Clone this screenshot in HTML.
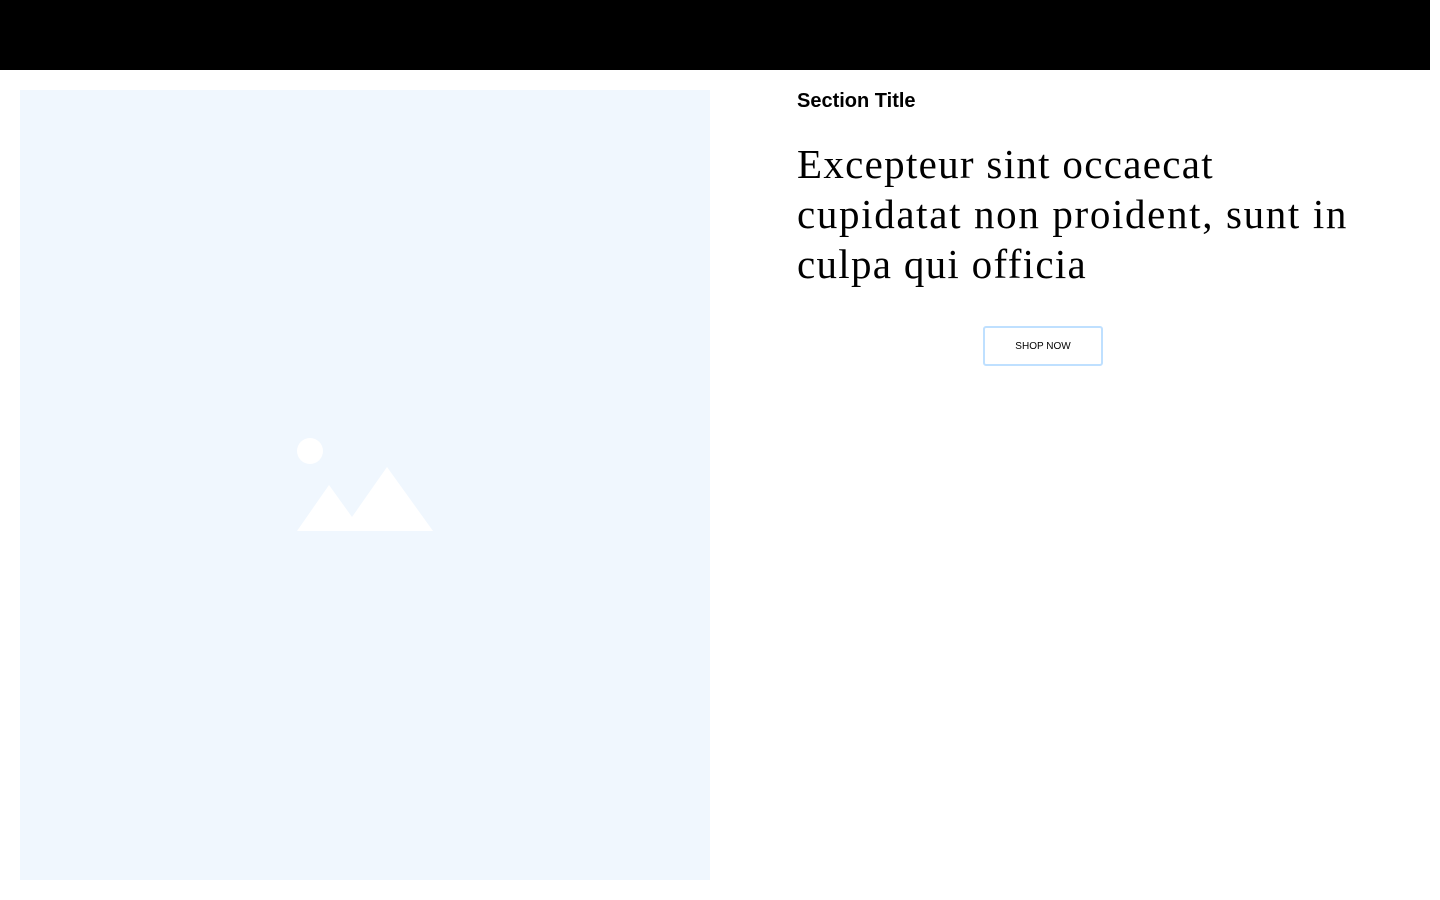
<!DOCTYPE html>
<html><head><style>
html,body{margin:0;padding:0;background:#fff;width:1440px;height:900px;overflow:hidden}
.bar{position:absolute;left:0;top:0;width:1430px;height:70px;background:#000}
.img{position:absolute;left:20px;top:90px;width:690px;height:790px;background:#f0f7fe}
.t{position:absolute;left:797px;top:90px;font:bold 20px "Liberation Sans",sans-serif;color:#000}
.h{position:absolute;left:797px;top:139px;width:640px;white-space:nowrap;font:41px/50px "Liberation Serif",serif;letter-spacing:1.3px;color:#000}
.h span{letter-spacing:1.65px}
.b{position:absolute;left:983px;top:326px;width:116px;height:35px;border:2px solid #bfe0ff;border-radius:3px;font:500 10px "Liberation Sans",sans-serif;display:flex;align-items:center;justify-content:center;color:#000;padding-top:1px;box-sizing:content-box}
</style></head><body>
<div class="bar"></div>
<div class="img"><svg width="690" height="790" style="position:absolute;left:0;top:0">
<circle cx="290" cy="361" r="13" fill="#fff"/>
<polygon points="277,441 309,395 332,427 367,377 413,441" fill="#fff"/>
</svg></div>
<div class="t">Section Title</div>
<div class="h">Excepteur sint occaecat<br><span>cupidatat non proident, sunt in</span><br>culpa qui officia</div>
<div class="b">SHOP NOW</div>
</body></html>
